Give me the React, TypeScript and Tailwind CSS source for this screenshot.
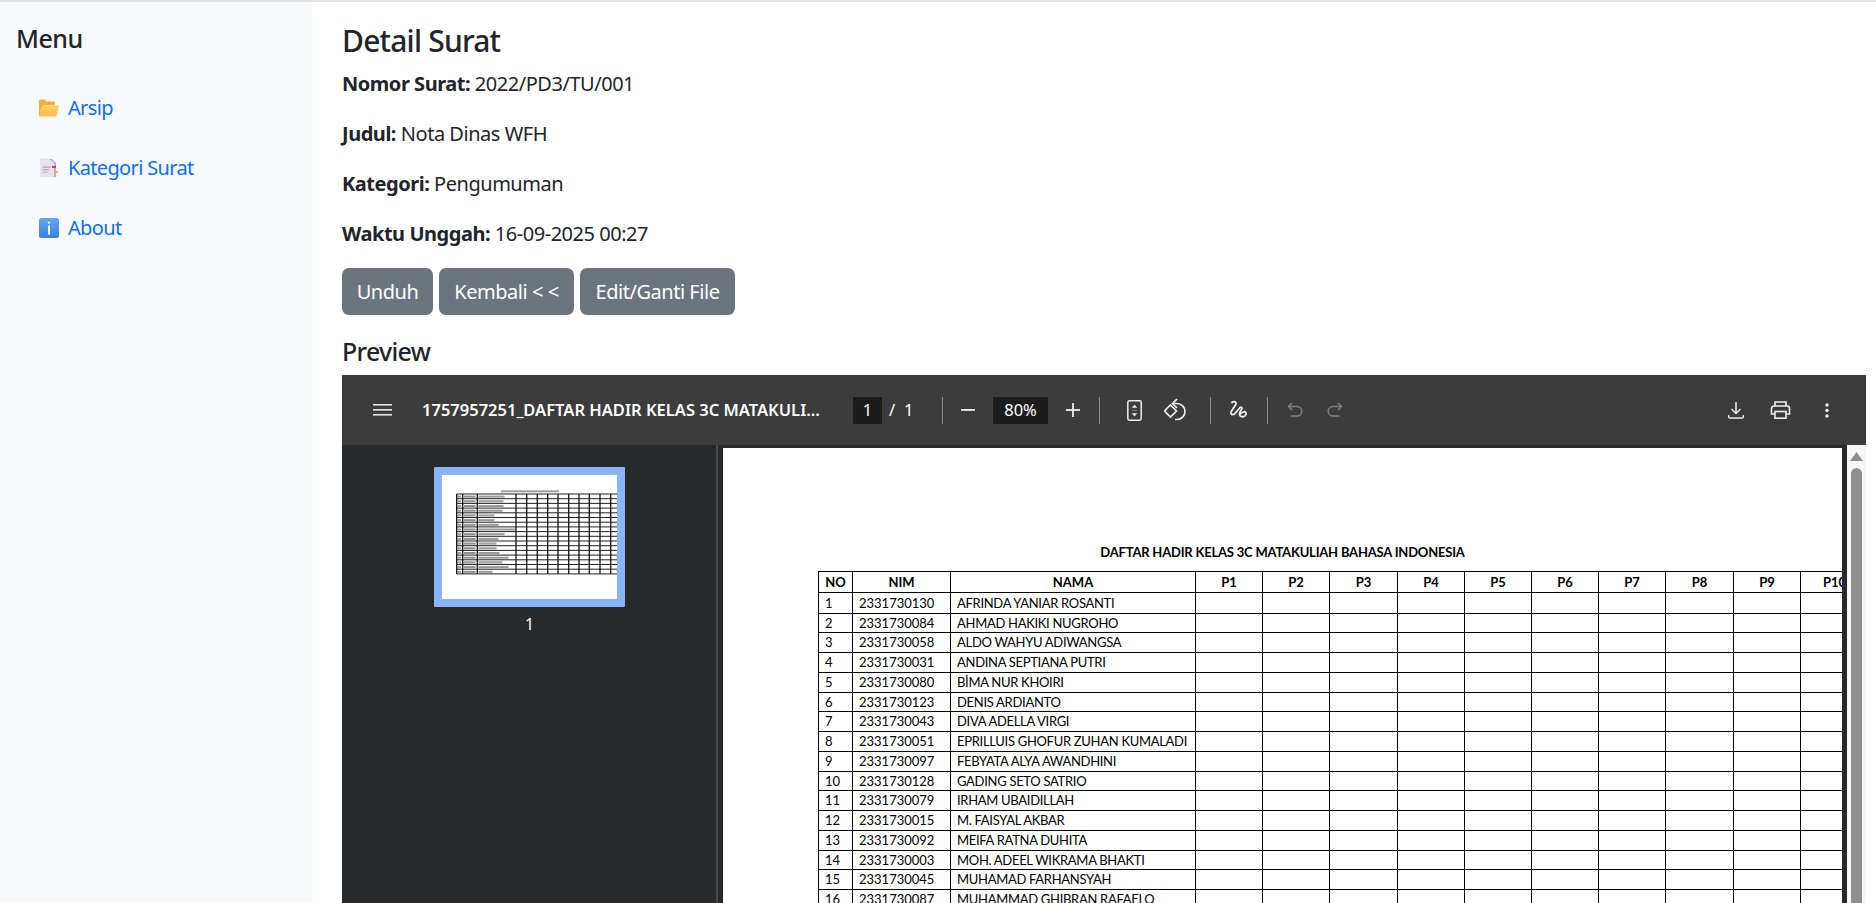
import type { ReactNode } from 'react';

const students = [
  ['1', '2331730130', 'AFRINDA YANIAR ROSANTI', 21],
  ['2', '2331730084', 'AHMAD HAKIKI NUGROHO', 19],
  ['3', '2331730058', 'ALDO WAHYU ADIWANGSA', 20],
  ['4', '2331730031', 'ANDINA SEPTIANA PUTRI', 20],
  ['5', '2331730080', 'BİMA NUR KHOIRI', 20],
  ['6', '2331730123', 'DENIS ARDIANTO', 19],
  ['7', '2331730043', 'DIVA ADELLA VIRGI', 20],
  ['8', '2331730051', 'EPRILLUIS GHOFUR ZUHAN KUMALADI', 20],
  ['9', '2331730097', 'FEBYATA ALYA AWANDHINI', 20],
  ['10', '2331730128', 'GADING SETO SATRIO', 19],
  ['11', '2331730079', 'IRHAM UBAIDILLAH', 20],
  ['12', '2331730015', 'M. FAISYAL AKBAR', 20],
  ['13', '2331730092', 'MEIFA RATNA DUHITA', 20],
  ['14', '2331730003', 'MOH. ADEEL WIKRAMA BHAKTI', 19],
  ['15', '2331730045', 'MUHAMAD FARHANSYAH', 20],
  ['16', '2331730087', 'MUHAMMAD GHIBRAN RAFAELO', 20],
] as const;

const meetings = ['P1', 'P2', 'P3', 'P4', 'P5', 'P6', 'P7', 'P8', 'P9', 'P10'];

const rowHeight: Record<number, string> = { 19: 'h-[19px]', 20: 'h-[20px]', 21: 'h-[21px]' };

function FolderIcon() {
  return (
    <svg width="20" height="18" viewBox="0 0 20 18">
      <defs>
        <linearGradient id="folderFront" x1="0" y1="0" x2="0" y2="1">
          <stop offset="0" stopColor="#ffd767" />
          <stop offset="1" stopColor="#fdb94f" />
        </linearGradient>
      </defs>
      <path d="M0 2a1.500 1.500 0 0 1 1.500-1.500h4.200l2 2h7.300a1 1 0 0 1 1 1V6H4L1.500 17H1a1 1 0 0 1-1-1z" fill="#f7a93c" />
      <path d="M4.200 6.200h15a.8.8 0 0 1 .8 1L17.600 16.500a1.500 1.500 0 0 1-1.400 1H1.200a1 1 0 0 1-1-1.100L3 7.200a1.200 1.200 0 0 1 1.200-1z" fill="url(#folderFront)" />
    </svg>
  );
}

function NotesIcon() {
  return (
    <svg width="20" height="20" viewBox="0 0 20 20">
      <path d="M5 1h8l4 4v14H5z" fill="#b9b3bd" />
      <path d="M1 1.500A1 1 0 0 1 2 .5h8l5 4.500v14H2a1 1 0 0 1-1-1z" fill="#e7e1ea" />
      <rect x="3.500" y="8.500" width="8" height="1.200" fill="#a9a4ad" />
      <rect x="3.500" y="11" width="6.500" height="1.200" fill="#b4afb8" />
      <rect x="3.500" y="13.500" width="5" height="1.200" fill="#bdb8c1" />
      <rect x="13" y="8" width="4" height="2" fill="#d9376e" />
      <rect x="16" y="13" width="3" height="2" fill="#e8b64c" />
    </svg>
  );
}

function InfoIcon() {
  return (
    <svg width="20" height="20" viewBox="0 0 20 20">
      <defs>
        <linearGradient id="infoBack" x1="0" y1="0" x2="0" y2="1">
          <stop offset="0" stopColor="#64a5ee" />
          <stop offset="1" stopColor="#3e7fe0" />
        </linearGradient>
      </defs>
      <rect width="20" height="20" rx="2.500" fill="url(#infoBack)" />
      <rect x="8.800" y="3.400" width="2.400" height="2.400" rx="1.200" fill="#f2f6fd" />
      <rect x="9" y="7.400" width="2" height="9.200" fill="#e8f0fc" />
    </svg>
  );
}

function SideLink({ icon, label }: { icon: ReactNode; label: string }) {
  return (
    <a className="flex h-[60px] items-center pl-[39px] tracking-[-0.66px] text-[#0d6efd]">
      <span className="flex w-[29px] shrink-0 items-center">{icon}</span>
      {label}
    </a>
  );
}

function Field({ label, value, className }: { label: string; value: string; className: string }) {
  return (
    <p className={`leading-[30px] ${className}`}>
      <strong className="font-bold">{label}</strong> {value}
    </p>
  );
}

function GrayButton({ className, children }: { className: string; children: ReactNode }) {
  return (
    <button type="button" className={`h-[47px] rounded-[7px] bg-[#6c757d] text-white ${className}`}>
      {children}
    </button>
  );
}

function Separator({ className }: { className: string }) {
  return <div className={`h-[27px] w-px shrink-0 bg-[#8a8a8a] ${className}`} />;
}

function Thumbnail() {
  const verticals = [14.7, 20.7, 35.3, 74, 84.7, 95.3, 105.7, 116, 126.7, 137, 147.3, 158, 168.7];
  const rows = Array.from({ length: 18 }, (_, i) => 19 + i * 4.7);
  const nameWidths = [26, 25, 25, 24, 16, 16, 20, 37, 26, 20, 18, 18, 21, 30, 24, 30, 14, 22];
  return (
    <svg width="175" height="124" viewBox="0 0 175 124" className="block bg-white">
      <rect x="59" y="15.300" width="58" height="2" fill="#a0a0a0" />
      {rows.map((y, i) => (
        <g key={y}>
          <line x1="14.700" x2="175" y1={y} y2={y} stroke="#222" strokeWidth="1" />
          {i < 17 && (
            <>
              <rect x="15.500" y={y + 1.600} width="3.500" height="2" fill="#9c9c9c" />
              <rect x="22" y={y + 1.600} width="11.500" height="2" fill="#8f8f8f" />
              <rect x="36.500" y={y + 1.600} width={nameWidths[i]} height="2" fill="#999" />
            </>
          )}
        </g>
      ))}
      {verticals.map((x) => (
        <line key={x} x1={x} x2={x} y1="19" y2="99" stroke="#111" strokeWidth="1.300" />
      ))}
    </svg>
  );
}

function Toolbar() {
  return (
    <div className="flex h-[70px] shrink-0 items-center bg-[#3c3c3c] text-white">
      <svg width="19" height="12" viewBox="0 0 19 12" className="ml-[31px] shrink-0" fill="#e8e8e8">
        <rect width="19" height="1.600" y="0" />
        <rect width="19" height="1.600" y="5" />
        <rect width="19" height="1.600" y="10" />
      </svg>
      <div className="ml-[30px] w-[431px] shrink-0 truncate text-[16.5px] font-semibold">
        1757957251_DAFTAR HADIR KELAS 3C MATAKULI...
      </div>
      <div className="flex h-[27px] w-[29px] shrink-0 items-center justify-center bg-[#1c1c1c] text-[16.5px]">1</div>
      <span className="ml-[7px] w-[15px] text-[16.5px]">/</span>
      <span className="w-[38px] text-[16.5px]">1</span>
      <Separator className="" />
      <svg width="14" height="2" viewBox="0 0 14 2" className="ml-[18px] shrink-0" fill="#eee">
        <rect width="14" height="1.800" />
      </svg>
      <div className="ml-[18px] flex h-[27px] w-[55px] shrink-0 items-center justify-center bg-[#1c1c1c] text-[16.5px]">80%</div>
      <svg width="14" height="14" viewBox="0 0 14 14" className="ml-[18px] shrink-0" fill="#eee">
        <rect width="14" height="1.800" y="6.100" />
        <rect width="1.800" height="14" x="6.100" />
      </svg>
      <Separator className="ml-[19px]" />
      <svg width="15" height="21" viewBox="0 0 15 21" className="ml-[27px] shrink-0" fill="none">
        <rect x="0.800" y="0.800" width="13.400" height="19.400" rx="1.600" stroke="#eee" strokeWidth="1.500" />
        <path d="M7.500 4.600 10.200 7.800H4.800zM7.500 16.400 4.800 13.200H10.200z" fill="#eee" />
        <rect x="5" y="9.900" width="5" height="1.200" fill="#eee" opacity="0.35" />
      </svg>
      <svg width="23" height="24" viewBox="0 0 23 24" className="ml-[22px] shrink-0" fill="none" stroke="#eee" strokeWidth="1.700">
        <path d="M6.500 7 12.500 13 6.500 19 .5 13z" />
        <path d="M9 5.500h4a8 8 0 0 1 0 16h-2" />
        <path d="M13 1 8.500 5.500 13 10" />
      </svg>
      <Separator className="ml-[23px]" />
      <svg width="20" height="20" viewBox="0 0 20 20" className="ml-[18px] shrink-0" fill="none" stroke="#eee" strokeWidth="1.800" strokeLinecap="round">
        <path d="M3 2.500c2.500-2 5 0 3.500 2.500L2.500 11c-1.500 2.500.5 4.500 3 3l5.500-6.500c1-1 2.500.2 1.800 1.500-.8 1.500-2.300 3-2.300 5 0 3 4 3.500 5.800 1.500 1.500-1.800.5-4.500-2-3.500-1.800.7-3 2-3 2" />
      </svg>
      <Separator className="ml-[18px]" />
      <svg width="16" height="16" viewBox="0 0 16 16" className="ml-[19px] shrink-0" fill="none" stroke="#7d7d7d" strokeWidth="1.600">
        <path d="M5 1 1.500 4.500 5 8" />
        <path d="M2 4.500h8a4.300 4.300 0 0 1 0 9.500H3.500" />
      </svg>
      <svg width="16" height="16" viewBox="0 0 16 16" className="ml-[24px] shrink-0" fill="none" stroke="#7d7d7d" strokeWidth="1.600">
        <path d="M11 1 14.500 4.500 11 8" />
        <path d="M14 4.500H6a4.300 4.300 0 0 0 0 9.500h6.500" />
      </svg>
      <svg width="16" height="17" viewBox="0 0 16 17" className="ml-auto shrink-0" fill="none" stroke="#eee" strokeWidth="1.500">
        <path d="M8 0v11M3.500 7 8 11.500 12.500 7" />
        <path d="M.5 13v1.200c0 1 .6 1.800 1.500 1.800h12c.9 0 1.500-.8 1.500-1.800V13" />
      </svg>
      <svg width="21" height="18" viewBox="0 0 21 18" className="ml-[26px] shrink-0" fill="none" stroke="#eee" strokeWidth="1.600">
        <path d="M5 5V1h11v4" />
        <path d="M5 13H1.500V7.500A2.500 2.500 0 0 1 4 5h13a2.500 2.500 0 0 1 2.500 2.500V13H16" />
        <rect x="5" y="10.500" width="11" height="6.700" />
      </svg>
      <svg width="4" height="15" viewBox="0 0 4 15" className="ml-[34px] mr-[37px] shrink-0" fill="#eee">
        <circle cx="2" cy="2" r="1.700" />
        <circle cx="2" cy="7.500" r="1.700" />
        <circle cx="2" cy="13" r="1.700" />
      </svg>
    </div>
  );
}

function PdfPage() {
  return (
    <div className="mt-[3px] w-[1119px] shrink-0 overflow-hidden bg-white pt-[95px] text-black [font-family:Lato,sans-serif]">
      <div className="mb-[10px] text-center text-[13px] leading-[18px] font-bold tracking-[-0.2px]">
        DAFTAR HADIR KELAS 3C MATAKULIAH BAHASA INDONESIA
      </div>
      <table className="ml-[95px] w-[1050px] table-fixed border-collapse text-[13px] leading-none">
        <colgroup>
          <col className="w-[34px]" />
          <col className="w-[98px]" />
          <col className="w-[245px]" />
          <col className="w-[67px]" />
          <col className="w-[67px]" />
          <col className="w-[68px]" />
          <col className="w-[67px]" />
          <col className="w-[67px]" />
          <col className="w-[67px]" />
          <col className="w-[67px]" />
          <col className="w-[68px]" />
          <col className="w-[67px]" />
          <col className="w-[68px]" />
        </colgroup>
        <thead>
          <tr className="h-[21px]">
            <th className="border border-black font-bold">NO</th>
            <th className="border border-black font-bold">NIM</th>
            <th className="border border-black font-bold">NAMA</th>
            {meetings.map((m) => (
              <th key={m} className="border border-black font-bold">{m}</th>
            ))}
          </tr>
        </thead>
        <tbody>
          {students.map(([no, nim, name, h]) => (
            <tr key={no} className={rowHeight[h]}>
              <td className="border border-black pl-[6px]">{no}</td>
              <td className="border border-black pl-[6px]">{nim}</td>
              <td className="border border-black pl-[6px] tracking-[-0.3px] whitespace-nowrap">{name}</td>
              {meetings.map((m) => (
                <td key={m} className="border border-black" />
              ))}
            </tr>
          ))}
        </tbody>
      </table>
    </div>
  );
}

function PdfViewer() {
  return (
    <div className="flex min-h-0 flex-1 flex-col overflow-hidden bg-[#28292b] tracking-normal">
      <Toolbar />
      <div className="flex min-h-0 flex-1">
        <div className="w-[376px] shrink-0 border-r-2 border-[#4a4b4d] pt-[22px] pl-[92px]">
          <div className="w-[191px] rounded-[1px] border-[8px] border-[#8ab4f8]">
            <Thumbnail />
          </div>
          <div className="mt-[7px] w-[191px] text-center text-[16px] leading-[20px] text-white">1</div>
        </div>
        <div className="w-[5px] shrink-0" />
        <PdfPage />
        <div className="w-[5px] shrink-0" />
        <div className="flex w-[19px] shrink-0 flex-col items-center bg-[#f7f7f7] pt-[7px]">
          <svg width="13" height="9" viewBox="0 0 13 9" fill="#8f8f8f">
            <path d="M6.500 0 13 9H0z" />
          </svg>
          <div className="mt-[7px] w-[11px] flex-1 rounded-t-[6px] bg-[#8f8f8f]" />
        </div>
      </div>
    </div>
  );
}

export default function App() {
  return (
    <div className="flex h-[903px] flex-col overflow-hidden bg-white text-[20px] tracking-[-0.47px] text-[#212529] [font-family:'Noto_Sans',sans-serif]">
      <div className="h-[2px] shrink-0 bg-[#e2e2e2]" />
      <div className="flex min-h-0 flex-1">
        <aside className="w-[312px] shrink-0 bg-[#f8f9fa] px-[16px] pt-[21px]">
          <h5 className="mb-[25px] text-[25px] leading-[30px] font-medium tracking-[-0.5px]">Menu</h5>
          <nav className="-ml-[16px]">
            <SideLink icon={<FolderIcon />} label="Arsip" />
            <SideLink icon={<NotesIcon />} label="Kategori Surat" />
            <SideLink icon={<InfoIcon />} label="About" />
          </nav>
        </aside>
        <main className="flex min-w-0 flex-1 flex-col pt-[21px] pr-[10px] pl-[30px]">
          <h4 className="mb-[10px] text-[30px] leading-[36px] font-medium tracking-[-0.8px]">Detail Surat</h4>
          <Field label="Nomor Surat:" value="2022/PD3/TU/001" className="mb-5" />
          <Field label="Judul:" value="Nota Dinas WFH" className="mb-5" />
          <Field label="Kategori:" value="Pengumuman" className="mb-5" />
          <Field label="Waktu Unggah:" value="16-09-2025 00:27" className="mb-[19px]" />
          <div className="flex gap-[6px]">
            <GrayButton className="w-[91px]">Unduh</GrayButton>
            <GrayButton className="w-[135px]">Kembali &lt; &lt;</GrayButton>
            <GrayButton className="w-[155px]">Edit/Ganti File</GrayButton>
          </div>
          <h5 className="mt-[21px] mb-[9px] text-[25px] leading-[30px] font-medium tracking-[-0.7px]">Preview</h5>
          <PdfViewer />
        </main>
      </div>
    </div>
  );
}
